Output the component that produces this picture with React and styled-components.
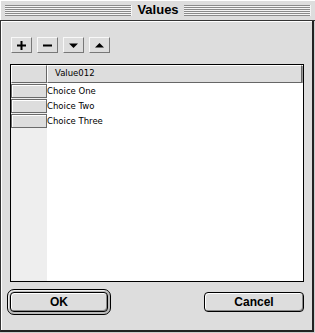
import React from 'react';
import styled, { createGlobalStyle } from 'styled-components';

const GlobalStyle = createGlobalStyle`
    html, body {
        margin: 0;
        padding: 0;
        background: #dddddd;
    }
`;

const
    Window = styled.div`
        width: 315px;
        height: 333px;
        box-sizing: border-box;
        display: flex;
        flex-direction: column;
        background: #cccccc;
        padding: 0 1px 1px 0;
        font-family: 'Liberation Sans', Arial, sans-serif;
    `,
    TitleBar = styled.div`
        height: 20px;
        flex: none;
        display: flex;
        align-items: center;
        gap: 4px;
        padding: 0 4px 0 5px;
        background: #dddddd;
        border-bottom: 1px solid #333;
        box-shadow: inset 1px 1px 0 #fff;
        margin-right: -1px;
    `,
    Stripes = styled.div`
        flex: 1;
        height: 11px;
        background: repeating-linear-gradient(
            to bottom,
            #8a8a8a 0px, #8a8a8a 1px,
            #f4f4f4 1px, #f4f4f4 2px
        );
        border-right: 1px solid #f4f4f4;
    `,
    Title = styled.div`
        font-weight: bold;
        font-size: 13px;
        color: #000;
        padding: 0 1px;
        line-height: 16px;
    `,
    Body = styled.div`
        flex: 1;
        display: flex;
        flex-direction: column;
        background: #dddddd;
        border-left: 1px solid #333;
        border-right: 2px solid #222;
        border-bottom: 2px solid #222;
        box-shadow: inset 1px 1px 0 #fff;
        padding: 16px 8px 15px 9px;
    `,
    Toolbar = styled.div`
        display: flex;
        gap: 5px;
        margin-left: 1px;
        margin-bottom: 11px;
    `,
    ToolButton = styled.div`
        width: 21px;
        height: 16px;
        box-sizing: border-box;
        display: flex;
        align-items: center;
        justify-content: center;
        background: #dddddd;
        border: 1px solid;
        border-color: #f8f8f8 #777 #777 #f8f8f8;
    `,
    Table = styled.div`
        flex: 1;
        display: flex;
        flex-direction: column;
        border: 1px solid #000;
        background: #fff;
        font-family: 'DejaVu Sans', Verdana, sans-serif;
        font-size: 8.5px;
    `,
    HeaderRow = styled.div`
        display: flex;
        height: 18px;
        margin-right: 1px;
    `,
    HeaderCell = styled.div`
        box-sizing: border-box;
        width: ${ p => p.$width ? p.$width + 'px' : 'auto' };
        flex: ${ p => p.$width ? 'none' : 1 };
        background: #dddddd;
        border: 1px solid;
        border-color: #fff #666 #666 #fff;
        box-shadow: 1px 1px 0 #999;
        padding-left: 7px;
        line-height: 15px;
        color: #000;
    `,
    Rows = styled.div`
        flex: 1;
        display: flex;
        flex-direction: column;
        gap: 1px;
        padding-top: 1px;
        background: linear-gradient(to right, #eeeeee 36px, #ffffff 36px);
    `,
    Row = styled.div`
        display: flex;
        height: 14px;
        align-items: center;
    `,
    RowHeader = styled.div`
        width: 36px;
        height: 14px;
        box-sizing: border-box;
        background: #dddddd;
        border: 1px solid #6a6a6a;
        box-shadow: inset 1px 1px 0 #fff;
    `,
    RowValue = styled.div`
        padding-left: 0;
        color: #000;
        line-height: 14px;
    `,
    ButtonRow = styled.div`
        display: flex;
        justify-content: space-between;
        align-items: center;
        margin-top: 7px;
        height: 26px;
    `,
    DefaultRing = styled.div`
        margin-left: -3px;
        padding: 2px;
        border: 1px solid #000;
        border-radius: 7px;
        background: #bbbbbb;
        box-shadow: inset 1px 1px 0 #eee;
    `,
    Button = styled.div`
        width: ${ p => p.$width }px;
        height: 20px;
        box-sizing: border-box;
        display: flex;
        align-items: center;
        justify-content: center;
        border: 1px solid #000;
        border-radius: 4px;
        background: #dddddd;
        box-shadow: inset 1px 1px 0 #fff, inset -1px -1px 0 #888;
        font-weight: bold;
        font-size: 12px;
        color: #000;
    `
;

const Icon = ( { kind } ) => {
    if ( kind === 'plus' ) {
        return (
            <svg width="9" height="9" viewBox="0 0 9 9">
                <rect x="3.5" y="0" width="2" height="9" fill="#000" />
                <rect x="0" y="3.5" width="9" height="2" fill="#000" />
            </svg>
        );
    }
    if ( kind === 'minus' ) {
        return (
            <svg width="9" height="9" viewBox="0 0 9 9">
                <rect x="0" y="3.5" width="9" height="2" fill="#000" />
            </svg>
        );
    }
    if ( kind === 'down' ) {
        return (
            <svg width="9" height="9" viewBox="0 0 9 9">
                <polygon points="0,2.5 9,2.5 4.5,7" fill="#000" />
            </svg>
        );
    }
    return (
        <svg width="9" height="9" viewBox="0 0 9 9">
            <polygon points="0,6.5 9,6.5 4.5,2" fill="#000" />
        </svg>
    );
};

const CHOICES = [ 'Choice One', 'Choice Two', 'Choice Three' ];

const App = () => (
    <>
        <GlobalStyle />
        <Window>
            <TitleBar>
                <Stripes />
                <Title>Values</Title>
                <Stripes />
            </TitleBar>
            <Body>
                <Toolbar>
                    { [ 'plus', 'minus', 'down', 'up' ].map( kind => (
                        <ToolButton key={ kind }>
                            <Icon kind={ kind } />
                        </ToolButton>
                    ) ) }
                </Toolbar>
                <Table>
                    <HeaderRow>
                        <HeaderCell $width={ 36 } />
                        <HeaderCell>Value012</HeaderCell>
                    </HeaderRow>
                    <Rows>
                        { CHOICES.map( choice => (
                            <Row key={ choice }>
                                <RowHeader />
                                <RowValue>{ choice }</RowValue>
                            </Row>
                        ) ) }
                    </Rows>
                </Table>
                <ButtonRow>
                    <DefaultRing>
                        <Button $width={ 98 }>OK</Button>
                    </DefaultRing>
                    <Button $width={ 100 }>Cancel</Button>
                </ButtonRow>
            </Body>
        </Window>
    </>
);

export default App;
